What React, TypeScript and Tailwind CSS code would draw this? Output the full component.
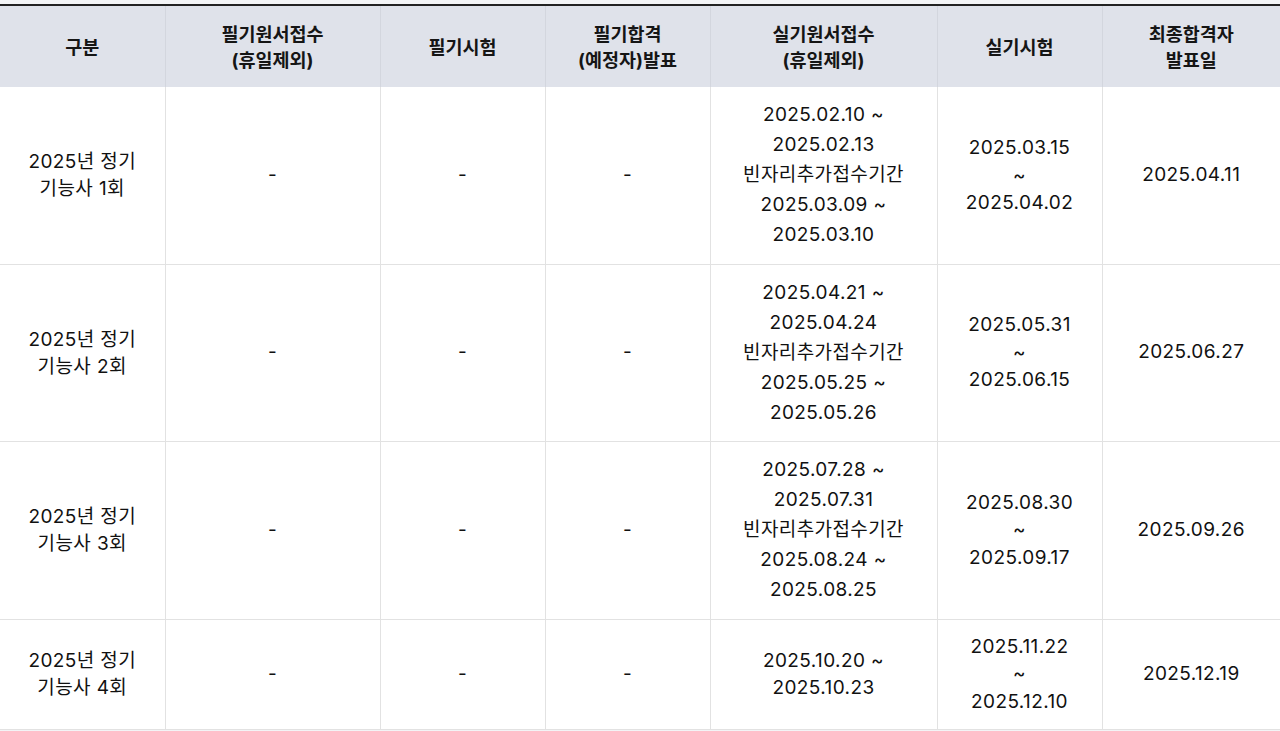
import React from "react";

const font = { fontFamily: '"Inter", "Noto Sans CJK KR", sans-serif' };

type Row = {
  label: [string, string];
  apply: string[];
  exam: string[];
  final: string;
  h: string;
};

const rows: Row[] = [
  {
    label: ["2025년 정기", "기능사 1회"],
    apply: ["2025.02.10 ~", "2025.02.13", "빈자리추가접수기간", "2025.03.09 ~", "2025.03.10"],
    exam: ["2025.03.15", "~", "2025.04.02"],
    final: "2025.04.11",
    h: "h-[177px]",
  },
  {
    label: ["2025년 정기", "기능사 2회"],
    apply: ["2025.04.21 ~", "2025.04.24", "빈자리추가접수기간", "2025.05.25 ~", "2025.05.26"],
    exam: ["2025.05.31", "~", "2025.06.15"],
    final: "2025.06.27",
    h: "h-[177px]",
  },
  {
    label: ["2025년 정기", "기능사 3회"],
    apply: ["2025.07.28 ~", "2025.07.31", "빈자리추가접수기간", "2025.08.24 ~", "2025.08.25"],
    exam: ["2025.08.30", "~", "2025.09.17"],
    final: "2025.09.26",
    h: "h-[178px]",
  },
  {
    label: ["2025년 정기", "기능사 4회"],
    apply: ["2025.10.20 ~", "2025.10.23"],
    exam: ["2025.11.22", "~", "2025.12.10"],
    final: "2025.12.19",
    h: "h-[110px]",
  },
];

const headers: string[][] = [
  ["구분"],
  ["필기원서접수", "(휴일제외)"],
  ["필기시험"],
  ["필기합격", "(예정자)발표"],
  ["실기원서접수", "(휴일제외)"],
  ["실기시험"],
  ["최종합격자", "발표일"],
];

const widths = ["w-[165px]", "w-[215px]", "w-[165px]", "w-[165px]", "w-[227px]", "w-[165px]", "w-[178px]"];

function Lines({ lines, lh }: { lines: string[]; lh: string }) {
  return (
    <div className={lh}>
      {lines.map((l, i) => (
        <div key={i}>{l}</div>
      ))}
    </div>
  );
}

export default function App() {
  return (
    <div className="w-[1280px] h-[731px] bg-[#f3f4f6] pt-[4px] overflow-hidden" style={font}>
      <table className="w-[1280px] table-fixed border-collapse bg-white text-[19px] tracking-[0.4px] text-[#111]">
        <colgroup>
          {widths.map((w, i) => (
            <col key={i} className={w} />
          ))}
        </colgroup>
        <thead>
          <tr className="h-[82px] border-t-2 border-t-[#222] bg-[#dfe2ea]">
            {headers.map((h, i) => (
              <th
                key={i}
                className="border-l border-r border-[#d3d6de] first:border-l-0 last:border-r-0 text-center align-middle font-bold text-[18.5px] tracking-normal text-[#151515]"
              >
                <Lines lines={h} lh="leading-[26px]" />
              </th>
            ))}
          </tr>
        </thead>
        <tbody>
          {rows.map((r, i) => (
            <tr key={i} className={`${r.h} border-b border-[#e2e2e2]`}>
              <td className="border-r border-[#e2e2e2] text-center align-middle">
                <Lines lines={r.label} lh="leading-[27px]" />
              </td>
              <td className="border-r border-[#e2e2e2] text-center align-middle">-</td>
              <td className="border-r border-[#e2e2e2] text-center align-middle">-</td>
              <td className="border-r border-[#e2e2e2] text-center align-middle">-</td>
              <td className="border-r border-[#e2e2e2] text-center align-middle">
                <Lines lines={r.apply} lh={r.apply.length > 2 ? "leading-[30px]" : "leading-[27px]"} />
              </td>
              <td className="border-r border-[#e2e2e2] text-center align-middle">
                <Lines lines={r.exam} lh="leading-[27.5px]" />
              </td>
              <td className="text-center align-middle">{r.final}</td>
            </tr>
          ))}
        </tbody>
      </table>
    </div>
  );
}
